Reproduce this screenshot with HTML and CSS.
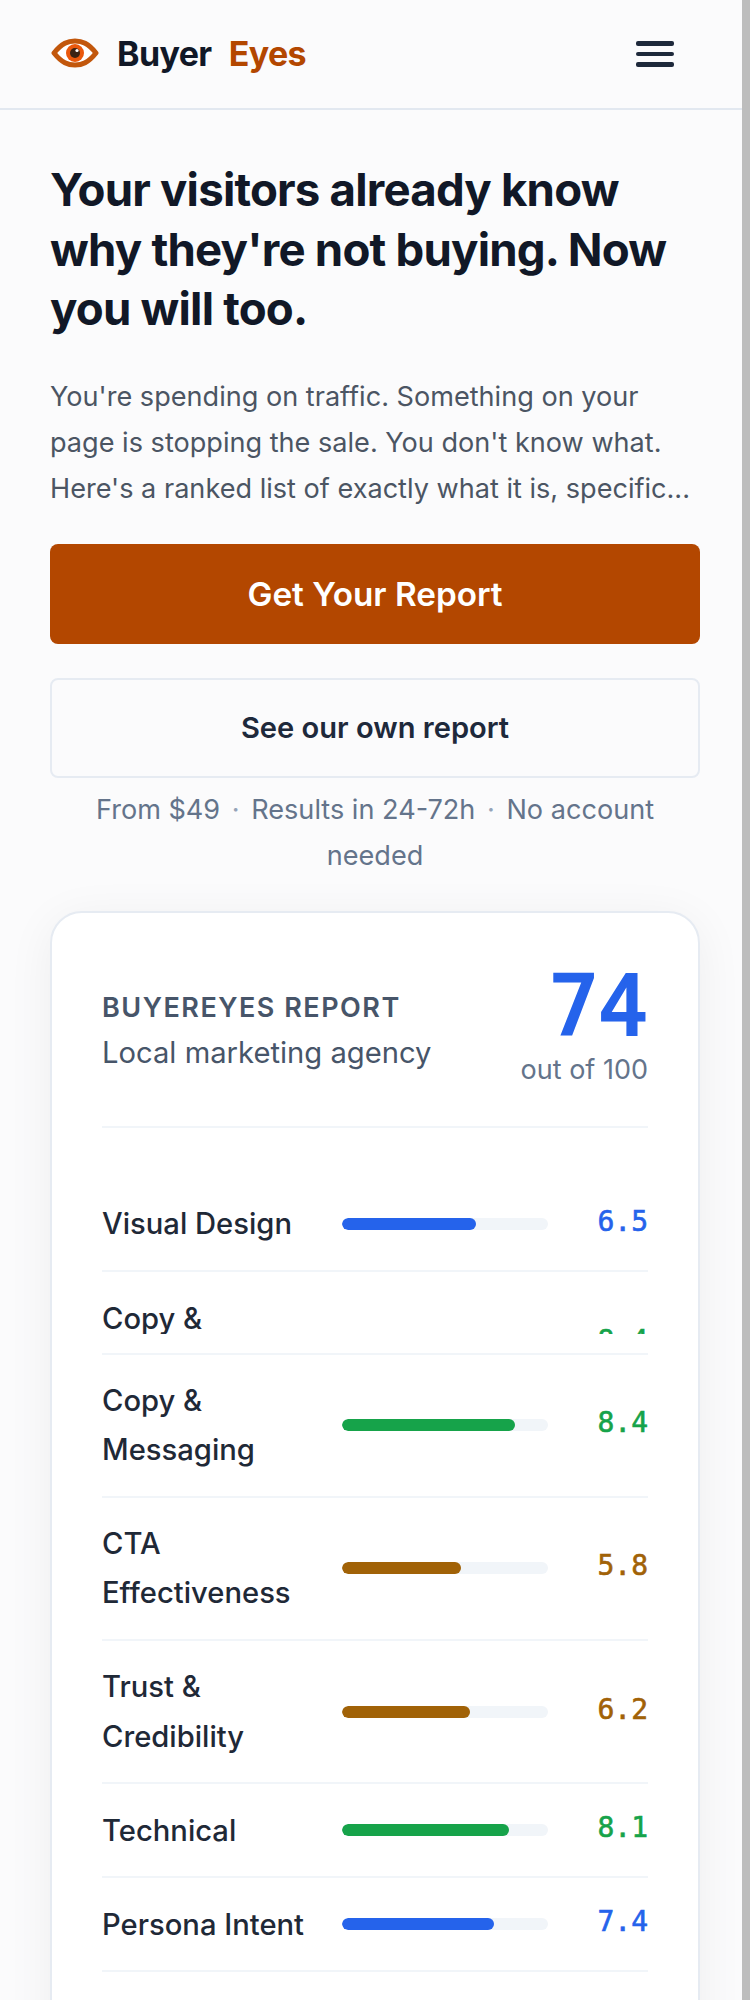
FILE: index.html
```html
<!DOCTYPE html>
<html lang="en">
<head>
<meta charset="utf-8">
<title>Buyer Eyes</title>
<link rel="stylesheet" href="styles.css">
</head>
<body>
<header class="nav">
  <a class="logo">
    <svg class="logo-eye" viewBox="0 0 48 32" width="48" height="32" aria-hidden="true">
      <path d="M3 16 C11 6 17 4 24 4 C31 4 37 6 45 16 C37 26 31 28 24 28 C17 28 11 26 3 16 Z" fill="#fff" stroke="#c2570c" stroke-width="5" stroke-linejoin="round"/>
      <circle cx="24" cy="16" r="9" fill="#ea580c"/>
      <circle cx="24" cy="16" r="5" fill="#3b2314"/>
      <circle cx="26" cy="13.5" r="1.6" fill="#fff"/>
    </svg>
    <span class="logo-text">Buyer</span>
    <span class="logo-accent">Eyes</span>
  </a>
  <div class="burger"><i></i><i></i><i></i></div>
</header>
<main class="hero">
  <h1>Your visitors already know why they're not buying. Now you will too.</h1>
  <p class="lede">You're spending on traffic. Something on your page is stopping the sale. You don't know what. Here's a ranked list of exactly what it is, specific...</p>
  <a class="btn btn-primary">Get Your Report</a>
  <a class="btn btn-secondary">See our own report</a>
  <p class="meta">From $49 <span class="dot">·</span> Results in 24-72h <span class="dot">·</span> No account needed</p>
  <section class="card">
    <div class="card-head">
      <div class="card-title">
        <div class="eyebrow">BUYEREYES REPORT</div>
        <div class="biz">Local marketing agency</div>
      </div>
      <div class="total">
        <div class="total-num">74</div>
        <div class="total-sub">out of 100</div>
      </div>
    </div>
    <div class="rows">
      <div class="row"><span class="name">Visual Design</span><span class="track"><span class="fill blue" style="width:65%"></span></span><span class="val blue-t">6.5</span></div>
      <div class="row-clip"><div class="clip-box"><div class="clip-row"><span class="name">Copy &amp; Messaging</span><span class="track"><span class="fill green" style="width:84%"></span></span><span class="val green-t">8.4</span></div></div></div>
      <div class="row"><span class="name">Copy &amp; Messaging</span><span class="track"><span class="fill green" style="width:84%"></span></span><span class="val green-t">8.4</span></div>
      <div class="row"><span class="name">CTA Effectiveness</span><span class="track"><span class="fill amber" style="width:58%"></span></span><span class="val amber-t">5.8</span></div>
      <div class="row"><span class="name">Trust &amp; Credibility</span><span class="track"><span class="fill amber" style="width:62%"></span></span><span class="val amber-t">6.2</span></div>
      <div class="row"><span class="name">Technical</span><span class="track"><span class="fill green" style="width:81%"></span></span><span class="val green-t">8.1</span></div>
      <div class="row"><span class="name">Persona Intent</span><span class="track"><span class="fill blue" style="width:74%"></span></span><span class="val blue-t">7.4</span></div>
    </div>
  </section>
</main>
<div class="scrollbar"></div>
</body>
</html>
```
FILE: styles.css
```css
* { box-sizing: border-box; }
html, body { margin: 0; padding: 0; }
body {
  height: 2000px;
  overflow: hidden;
  background: #fbfbfc;
  font-family: Inter, "Liberation Sans", sans-serif;
  color: #111827;
  position: relative;
}
.scrollbar {
  position: absolute;
  right: 0;
  top: 0;
  width: 8px;
  height: 2000px;
  background: #bdbdbd;
}
.nav {
  height: 110px;
  border-bottom: 2px solid #e2e8f0;
  padding: 0 50px 2px 51px;
  display: flex;
  align-items: center;
  justify-content: space-between;
}
.logo {
  display: flex;
  align-items: center;
  font-size: 34px;
  font-weight: 700;
  letter-spacing: -0.6px;
}
.logo-eye { margin-right: 18px; }
.logo-accent { color: #b34700; margin-left: 17px; }
.burger {
  width: 38px;
  display: flex;
  flex-direction: column;
  gap: 6px;
  margin: 2px 26px 0 0;
}
.burger i {
  display: block;
  height: 4.5px;
  border-radius: 2px;
  background: #1e293b;
}
.hero { padding: 50px 50px 0; }
h1 {
  margin: 0 0 35px;
  font-size: 45.6px;
  line-height: 59.5px;
  font-weight: 700;
  letter-spacing: -0.8px;
}
.lede {
  margin: 0 0 32px;
  font-size: 27.1px;
  line-height: 46px;
  color: #4b5563;
}
.btn {
  display: flex;
  align-items: center;
  justify-content: center;
  height: 100px;
  border-radius: 8px;
  font-weight: 600;
}
.btn-primary {
  background: #b34700;
  color: #fff;
  font-size: 33.3px;
  margin-bottom: 34px;
}
.btn-secondary {
  border: 2px solid #e6ebf2;
  font-size: 29.1px;
  color: #1e293b;
}
.meta {
  margin: 9px 0 32px;
  text-align: center;
  font-size: 27.1px;
  line-height: 46px;
  color: #64748b;
  padding: 0 40px;
}
.dot { color: #94a3b8; margin: 0 4px; }
.card {
  background: #fff;
  border: 2px solid #e6ebf2;
  border-radius: 32px;
  padding: 51px 50px 0;
  box-shadow: 0 8px 48px rgba(15, 23, 42, 0.06);
  height: 1200px;
}
.card-head {
  display: flex;
  justify-content: space-between;
  align-items: center;
  padding-bottom: 40px;
  border-bottom: 2px solid #f1f5f9;
  margin-bottom: 50px;
}
.card-title { padding-top: 12px; }
.eyebrow {
  font-size: 27px;
  font-weight: 600;
  letter-spacing: 1.5px;
  color: #475569;
}
.biz { font-size: 29.2px; color: #475569; margin-top: 11px; }
.total { text-align: right; }
.total-num {
  font-family: "DejaVu Sans Mono", monospace;
  font-size: 82px;
  line-height: 84px;
  font-weight: 400;
  -webkit-text-stroke: 3px #2563eb;
  color: #2563eb;
}
.total-sub { font-size: 27px; color: #64748b; margin-top: 5px; }
.row {
  display: flex;
  align-items: center;
  padding: 21px 0;
  border-bottom: 2px solid #f1f5f9;
}
.name {
  width: 240px;
  font-size: 29.2px;
  line-height: 1.7;
  font-weight: 500;
  color: #1f2937;
}
.track {
  width: 206px;
  height: 12px;
  border-radius: 6px;
  background: #f1f5f9;
  overflow: hidden;
  display: block;
}
.fill { display: block; height: 100%; border-radius: 6px; }
.blue { background: #2563eb; }
.green { background: #16a34a; }
.amber { background: #a16207; }
.val {
  margin-left: auto;
  font-family: "DejaVu Sans Mono", monospace;
  font-size: 28px;
  line-height: 46px;
  padding-bottom: 4px;
  font-weight: 400;
  -webkit-text-stroke: 0.6px currentColor;
}
.blue-t { color: #2563eb; }
.green-t { color: #16a34a; }
.amber-t { color: #a16207; }
.row-clip {
  padding: 22px 0 19px;
  border-bottom: 2px solid #f1f5f9;
}
.clip-box {
  height: 40px;
  overflow: hidden;
}
.clip-row {
  display: flex;
  align-items: center;
}
```
